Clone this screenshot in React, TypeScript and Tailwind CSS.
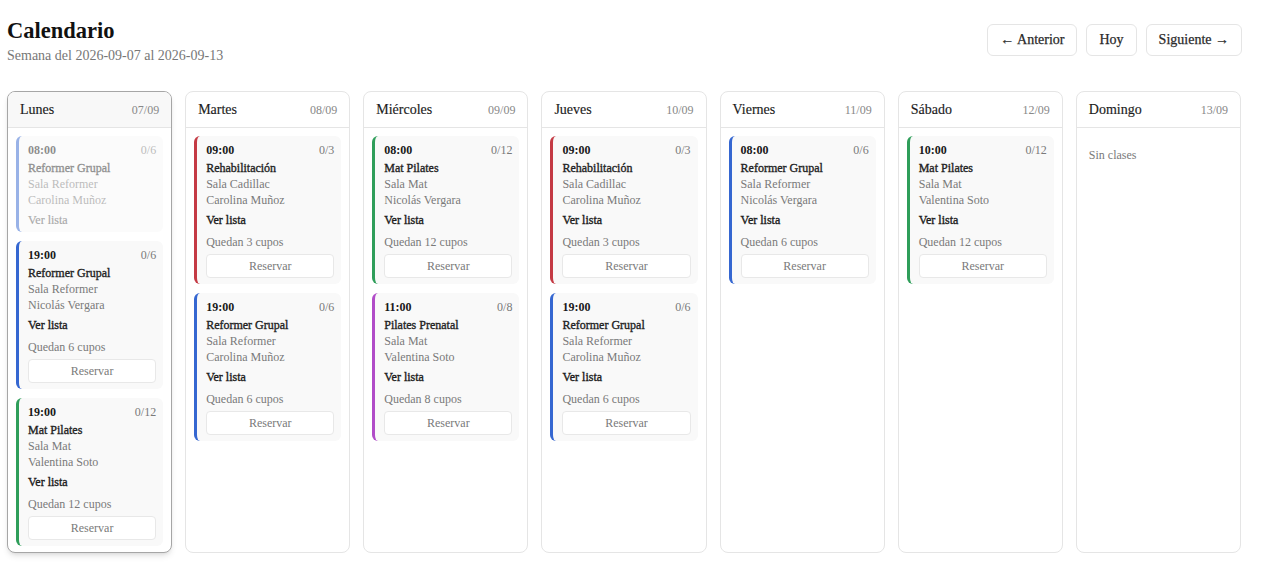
import React from 'react';

type Session = {
  time: string;
  name: string;
  room: string;
  coach: string;
  capacity: number;
  color: string;
  past?: boolean;
};

type Day = {
  name: string;
  date: string;
  today?: boolean;
  sessions: Session[];
};

const BLUE = 'border-l-[#3567d1]';
const RED = 'border-l-[#c43a44]';
const GREEN = 'border-l-[#2f9e5a]';
const PURPLE = 'border-l-[#b14cc8]';

const days: Day[] = [
  {
    name: 'Lunes',
    date: '07/09',
    today: true,
    sessions: [
      { time: '08:00', name: 'Reformer Grupal', room: 'Sala Reformer', coach: 'Carolina Muñoz', capacity: 6, color: BLUE, past: true },
      { time: '19:00', name: 'Reformer Grupal', room: 'Sala Reformer', coach: 'Nicolás Vergara', capacity: 6, color: BLUE },
      { time: '19:00', name: 'Mat Pilates', room: 'Sala Mat', coach: 'Valentina Soto', capacity: 12, color: GREEN },
    ],
  },
  {
    name: 'Martes',
    date: '08/09',
    sessions: [
      { time: '09:00', name: 'Rehabilitación', room: 'Sala Cadillac', coach: 'Carolina Muñoz', capacity: 3, color: RED },
      { time: '19:00', name: 'Reformer Grupal', room: 'Sala Reformer', coach: 'Carolina Muñoz', capacity: 6, color: BLUE },
    ],
  },
  {
    name: 'Miércoles',
    date: '09/09',
    sessions: [
      { time: '08:00', name: 'Mat Pilates', room: 'Sala Mat', coach: 'Nicolás Vergara', capacity: 12, color: GREEN },
      { time: '11:00', name: 'Pilates Prenatal', room: 'Sala Mat', coach: 'Valentina Soto', capacity: 8, color: PURPLE },
    ],
  },
  {
    name: 'Jueves',
    date: '10/09',
    sessions: [
      { time: '09:00', name: 'Rehabilitación', room: 'Sala Cadillac', coach: 'Carolina Muñoz', capacity: 3, color: RED },
      { time: '19:00', name: 'Reformer Grupal', room: 'Sala Reformer', coach: 'Carolina Muñoz', capacity: 6, color: BLUE },
    ],
  },
  {
    name: 'Viernes',
    date: '11/09',
    sessions: [
      { time: '08:00', name: 'Reformer Grupal', room: 'Sala Reformer', coach: 'Nicolás Vergara', capacity: 6, color: BLUE },
    ],
  },
  {
    name: 'Sábado',
    date: '12/09',
    sessions: [
      { time: '10:00', name: 'Mat Pilates', room: 'Sala Mat', coach: 'Valentina Soto', capacity: 12, color: GREEN },
    ],
  },
  { name: 'Domingo', date: '13/09', sessions: [] },
];

function SessionCard({ session }: { session: Session }) {
  return (
    <div
      className={`rounded-md border-l-[3px] ${session.color} bg-[#f9f9f9] pt-[6px] pr-[7px] pl-[9px] text-xs leading-4 ${
        session.past ? 'pb-1 opacity-50' : 'pb-[6px]'
      }`}
    >
      <div className="flex items-center justify-between">
        <span className="font-bold text-[#1a1a1a]">{session.time}</span>
        <span className="text-[#7a7a7a]">0/{session.capacity}</span>
      </div>
      <div className="mt-[2px] text-[#1f1f1f] [-webkit-text-stroke:0.35px_#1f1f1f]">{session.name}</div>
      <div className="text-[#7a7a7a]">{session.room}</div>
      <div className="text-[#7a7a7a]">{session.coach}</div>
      <div
        className={`mt-1 ${
          session.past ? 'text-[#555] [-webkit-text-stroke:0.2px_#555]' : 'text-[#1a1a1a] [-webkit-text-stroke:0.35px_#1a1a1a]'
        }`}
      >
        Ver lista
      </div>
      {!session.past && (
        <>
          <div className="mt-[6px] text-[#7a7a7a]">Quedan {session.capacity} cupos</div>
          <button className="mt-1 h-6 w-full rounded border border-[#e8e8e8] bg-white text-[#7a7a7a]">
            Reservar
          </button>
        </>
      )}
    </div>
  );
}

function DayColumn({ day }: { day: Day }) {
  return (
    <div
      className={`flex flex-col overflow-hidden rounded-lg border bg-white ${
        day.today ? 'border-[#a6a6a6] shadow-md' : 'border-[#e5e5e5]'
      }`}
    >
      <div
        className={`flex h-9 items-center justify-between border-b border-[#e5e5e5] px-3 ${
          day.today ? 'bg-[#f8f8f8]' : ''
        }`}
      >
        <span className="text-sm text-[#1c1c1c] [-webkit-text-stroke:0.15px_#1c1c1c]">{day.name}</span>
        <span className="text-xs text-[#888]">{day.date}</span>
      </div>
      <div className="flex flex-col gap-[9px] px-2 pt-2 pb-[6px]">
        {day.sessions.length === 0 && (
          <div className="pt-[11px] pl-1 text-xs text-[#7a7a7a]">Sin clases</div>
        )}
        {day.sessions.map((s, i) => (
          <SessionCard key={i} session={s} />
        ))}
      </div>
    </div>
  );
}

export default function App() {
  return (
    <div className="min-h-screen bg-white font-['Liberation_Serif',serif] text-[#1c1c1c]">
      <div className="ml-[7px] w-[1235px] pt-[17px]">
        {/* Header */}
        <div className="flex items-start justify-between">
          <div>
            <h1 className="text-[22.5px] leading-7 font-bold text-[#111]">Calendario</h1>
            <p className="mt-[1px] text-sm leading-5 text-[#777]">Semana del 2026-09-07 al 2026-09-13</p>
          </div>
          <div className="mt-[7px] flex gap-[9px]">
            <button className="h-8 rounded-md border border-[#e5e5e5] bg-white px-3 text-sm text-[#2a2a2a] [-webkit-text-stroke:0.25px_#2a2a2a]">
              ← Anterior
            </button>
            <button className="h-8 rounded-md border border-[#e5e5e5] bg-white px-3 text-sm text-[#2a2a2a] [-webkit-text-stroke:0.25px_#2a2a2a]">
              Hoy
            </button>
            <button className="h-8 rounded-md border border-[#e5e5e5] bg-white px-3 text-sm text-[#2a2a2a] [-webkit-text-stroke:0.25px_#2a2a2a]">
              Siguiente →
            </button>
          </div>
        </div>

        {/* Week grid */}
        <div className="mt-[25px] grid w-[1234px] grid-cols-7 gap-[13px]">
          {days.map((d) => (
            <DayColumn key={d.name} day={d} />
          ))}
        </div>
      </div>
    </div>
  );
}
